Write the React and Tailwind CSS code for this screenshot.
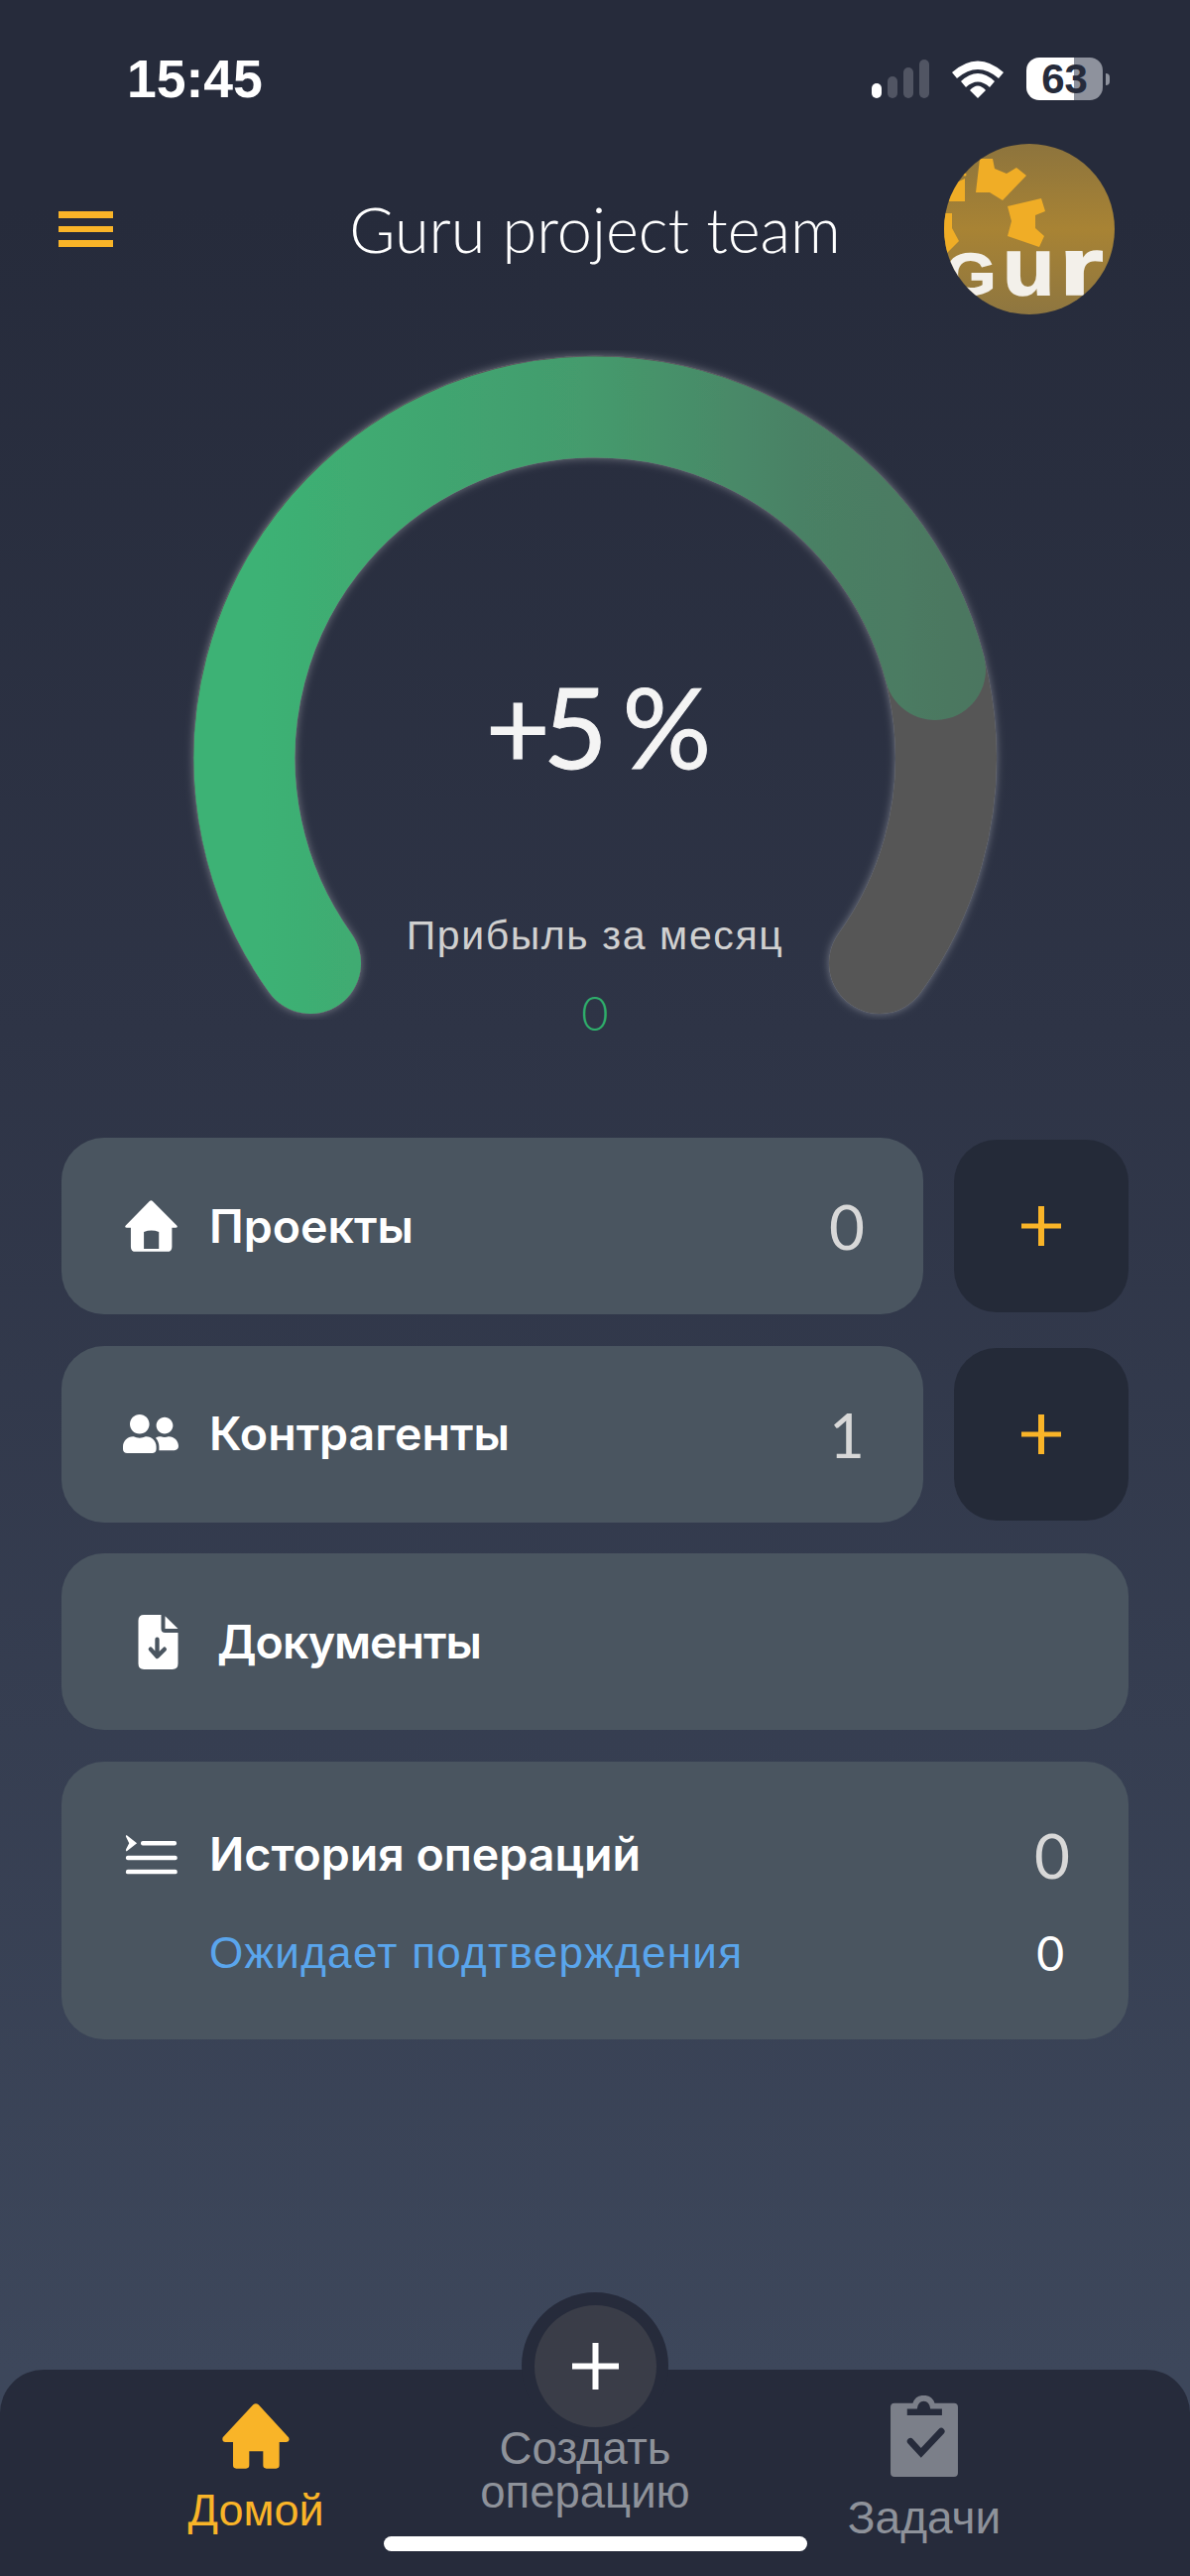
import React from "react";
import { FaUserFriends } from "react-icons/fa";

function Gauge() {
  return (
    <svg width="1200" height="830" viewBox="0 0 1200 830" className="block">
      <defs>
        <linearGradient id="g" gradientUnits="userSpaceOnUse" x1="260" y1="0" x2="990" y2="0">
          <stop offset="0" stopColor="#3db274" />
          <stop offset="0.45" stopColor="#449b6d" />
          <stop offset="0.75" stopColor="#4a8165" />
          <stop offset="1" stopColor="#4c7660" />
        </linearGradient>
        <filter id="glow" x="-10%" y="-10%" width="120%" height="120%">
          <feDropShadow dx="0" dy="0" stdDeviation="4" floodColor="#ffffff" floodOpacity="0.35" />
        </filter>
      </defs>
      <g fill="none" strokeWidth="102" strokeLinecap="round" filter="url(#glow)">
        <path d="M 313 654 A 354 354 0 1 1 887 654" stroke="#565656" />
        <path d="M 313 654 A 354 354 0 1 1 943 358" stroke="url(#g)" />
      </g>
    </svg>
  );
}

function RowHouse() {
  return (
    <svg viewBox="0 0 161 157" className="h-[52px] w-[53px]" fill="white" fillRule="evenodd">
      <path d="M76 2 Q80 -1 84 2 L158 76 Q164 83 155 84 H144 V142 Q144 157 129 157 H33 Q18 157 18 142 V84 H6 Q-3 83 3 76 Z M58 97 Q81 88 104 97 V148 H58 Z" />
    </svg>
  );
}

function TabHouse() {
  return (
    <svg viewBox="0 0 204 196" className="h-[66px] w-[68px]" fill="#f9b428">
      <path d="M94 3 Q102 -3 110 3 L201 102 Q207 114 194 116 H173 V186 Q173 196 163 196 H134 Q124 196 124 186 V144 H82 V186 Q82 196 72 196 H43 Q33 196 33 186 V116 H10 Q-2 114 2 102 Z" />
    </svg>
  );
}

function DocIcon() {
  return (
    <svg viewBox="43 38 120 165" className="h-[55px] w-[41px]">
      <path d="M60 38 H112 V80 Q112 92 124 92 H163 V186 Q163 203 146 203 H60 Q43 203 43 186 V55 Q43 38 60 38 Z" fill="white" />
      <path d="M124 42 L163 80 H124 Z" fill="white" />
      <path d="M100 112 V160 M80 142 L100 164 L122 142" fill="none" stroke="#4a5560" strokeWidth="13" strokeLinecap="round" strokeLinejoin="round" />
    </svg>
  );
}

function HistoryIcon() {
  return (
    <svg viewBox="42 33 160 122" className="h-[40px] w-[53px]" fill="white">
      <path d="M46 33 L78 58 L46 83 Q42 80 45 76 L54 58 L45 40 Q42 36 46 33 Z" />
      <rect x="90" y="51" width="110" height="14" rx="6" />
      <rect x="44" y="96" width="158" height="14" rx="6" />
      <rect x="44" y="139" width="158" height="14" rx="6" />
    </svg>
  );
}

function Plus() {
  return (
    <svg width="40" height="40" viewBox="0 0 40 40" fill="#f9b428">
      <rect x="0" y="17.5" width="40" height="5" />
      <rect x="17" y="0" width="6" height="40" />
    </svg>
  );
}

function Count({ children }) {
  return <span className="font-['Lato',sans-serif] text-[62px] leading-none text-[#d8d8d8]">{children}</span>;
}

const label = "font-['Inter',sans-serif] text-[46.5px] font-semibold text-white leading-none";

function Row({ icon, text, count }) {
  return (
    <div className="flex items-center gap-[31px]">
      <div className="flex h-[178px] flex-1 items-center rounded-[43px] bg-[#4a5560] pl-[62px] pr-[59px]">
        <div className="mr-[31px] flex w-[56px] justify-center text-white">{icon}</div>
        <span className={label}>{text}</span>
        <span className="ml-auto"><Count>{count}</Count></span>
      </div>
      <div className="flex h-[174px] w-[176px] items-center justify-center rounded-[43px] bg-[#242a38]">
        <Plus />
      </div>
    </div>
  );
}

function AvatarLogo() {
  return (
    <svg viewBox="0 0 172 172" className="absolute inset-0 h-full w-full" fill="#f0ad26">
      <polygon points="36,15 49,15 51,25 63,30 73,24 83,32 59,57 46,49 32,49" />
      <polygon points="64,63 98,55 102,68 92,72 92,85 101,93 96,104 64,93 68,78" />
      <polygon points="21,35 21,58 4,58 0,64 0,45" />
      <polygon points="0,70 8,70 8,85 15,98 3,110 0,108" />
      <circle cx="21" cy="31" r="1.5" />
    </svg>
  );
}

export default function App() {
  return (
    <div className="relative flex h-[2597px] w-[1200px] flex-col overflow-hidden bg-[linear-gradient(180deg,#262b3b_0%,#262b3b_8%,#2e3446_40%,#3d475b_92%)] font-['Liberation_Sans',sans-serif]">
      {/* status bar */}
      <div className="flex h-[145px] items-start justify-between pl-[128px] pr-[81px] pt-[50px]">
        <span className="text-[53.5px] font-bold leading-[60px] text-white">15:45</span>
        <div className="flex items-center pt-[8px]">
          <div className="flex h-[39px] items-end gap-[6px]">
            <div className="h-[15px] w-[10px] rounded-full bg-white" />
            <div className="h-[22px] w-[10px] rounded-full bg-[#515563]" />
            <div className="h-[31px] w-[10px] rounded-full bg-[#515563]" />
            <div className="h-[39px] w-[10px] rounded-full bg-[#515563]" />
          </div>
          <svg width="52" height="38" viewBox="0 0 52 38" className="ml-[23px]" fill="white">
            <path d="M0 12 Q26 -11 52 12 L47 18 Q26 0 5 18 Z" />
            <path d="M9 21 Q26 5 43 21 L38 27 Q26 16 14 27 Z" />
            <path d="M18 30 Q26 21 34 30 L26 38 Z" />
          </svg>
          <div className="relative ml-[23px] flex h-[43px] w-[77px] items-center justify-center rounded-[13px] bg-[linear-gradient(90deg,#ffffff_62%,#8e929d_62%)]">
            <span className="text-[42px] font-bold leading-none text-[#262b3b]">63</span>
          </div>
          <div className="ml-[3px] h-[12px] w-[4px] rounded-r-full bg-[#8e929d]" />
        </div>
      </div>

      {/* header */}
      <div className="grid h-[172px] grid-cols-[1fr_auto_1fr] items-center px-[59px]">
        <div className="flex w-[55px] flex-col gap-[8px]">
          <div className="h-[6.5px] bg-[#f9b428]" />
          <div className="h-[6.5px] bg-[#f9b428]" />
          <div className="h-[6.5px] bg-[#f9b428]" />
        </div>
        <span className="pb-[2px] font-['Lato',sans-serif] text-[63px] font-light leading-none text-white">Guru project team</span>
        <div className="relative mr-[17px] h-[172px] w-[172px] justify-self-end overflow-hidden rounded-full bg-[linear-gradient(180deg,#8d743d_0%,#a88334_50%,#8e7640_100%)]">
          <AvatarLogo />
          <span className="absolute left-[1px] top-[89px] flex items-baseline whitespace-nowrap font-bold leading-[70px] text-[#f3f0ea] [-webkit-text-stroke:1.5px_#f3f0ea]">
            <span className="w-[58px] origin-left scale-x-[1.1] text-[60px]">G</span>
            <span className="w-[57px] origin-left scale-x-[1.05] text-[82px]">u</span>
            <span className="origin-left scale-x-[1.4] text-[82px]">r</span>
          </span>
        </div>
      </div>

      {/* gauge */}
      <div className="relative h-[830px] w-full">
        <Gauge />
        <div className="absolute left-0 right-0 top-[359px] text-center font-['Lato',sans-serif] text-[112px] leading-none tracking-[-7px] text-[#f4f4f4] [-webkit-text-stroke:1px_#f4f4f4]">+5 %</div>
        <div className="absolute left-0 right-0 top-[606px] text-center text-[41px] leading-none tracking-[1.6px] text-[#d0d0d0]">Прибыль за месяц</div>
        <div className="absolute left-0 right-0 top-[681px] text-center font-['Lato',sans-serif] text-[47px] font-light leading-none text-[#2ead6b]">0</div>
      </div>

      {/* cards */}
      <div className="flex flex-col gap-[31.5px] px-[62px]">
        <Row icon={<RowHouse />} text="Проекты" count="0" />
        <Row icon={<FaUserFriends className="h-[45px] w-[56px]" />} text="Контрагенты" count="1" />
        <div className="flex h-[178px] items-center rounded-[43px] bg-[#4a5560] pl-[77px]">
          <DocIcon />
          <span className={label + " ml-[39px] tracking-[-1px]"}>Документы</span>
        </div>
        <div className="flex h-[280px] flex-col justify-center gap-[44px] rounded-[43px] bg-[#4a5560] pl-[62px] pr-[59px]">
          <div className="flex items-center">
            <div className="mr-[31px] flex w-[56px] justify-center text-white"><HistoryIcon /></div>
            <span className={label}>История операций</span>
            <span className="ml-auto"><Count>0</Count></span>
          </div>
          <div className="flex items-center pl-[87px] pr-[6px]">
            <span className="text-[44px] leading-none tracking-[1.3px] text-[#5aa5ec]">Ожидает подтверждения</span>
            <span className="ml-auto font-['Lato',sans-serif] text-[48px] leading-none text-white">0</span>
          </div>
        </div>
      </div>

      {/* tab bar */}
      <div className="absolute bottom-0 left-0 right-0 grid h-[208px] grid-cols-[516px_148px_536px] rounded-t-[44px] bg-[#262b3b]">
        <div className="flex flex-col items-center pt-[34px]">
          <TabHouse />
          <span className="mt-[19px] text-[45px] leading-none text-[#f9b428]">Домой</span>
        </div>
        <div />
        <div className="flex flex-col items-center pt-[26px] text-[#8e929a]">
          <svg width="68" height="82" viewBox="55 45 203 245">
            <path d="M67 68 H122 A35 35 0 0 1 188 68 H246 Q258 68 258 80 V278 Q258 290 246 290 H67 Q55 290 55 278 V80 Q55 68 67 68 Z" fill="#7b7f89" />
            <path d="M105 85 H135 Q138 62 155 62 Q172 62 175 85 H210 V105 H105 Z" fill="#262b3b" />
            <path d="M115 183 L147 218 L208 153" fill="none" stroke="#262b3b" strokeWidth="20" strokeLinecap="round" />
          </svg>
          <span className="mt-[18px] text-[46px] leading-none">Задачи</span>
        </div>
        <div className="absolute left-[430px] top-[58px] w-[320px] text-center text-[45.5px] leading-[44px] text-[#8e929a]">Создать<br />операцию</div>
      </div>

      {/* floating button */}
      <div className="absolute left-[526px] top-[2311px] flex h-[148px] w-[148px] items-center justify-center rounded-full bg-[#262b3b]">
        <div className="flex h-[123px] w-[123px] items-center justify-center rounded-full bg-[#3a3d48]">
          <svg width="47" height="47" viewBox="0 0 47 47" fill="white">
            <rect x="0" y="20.5" width="47" height="6" />
            <rect x="20.5" y="0" width="6" height="47" />
          </svg>
        </div>
      </div>

      {/* home indicator */}
      <div className="absolute left-[387px] top-[2557px] h-[15px] w-[427px] rounded-full bg-white" />
    </div>
  );
}
